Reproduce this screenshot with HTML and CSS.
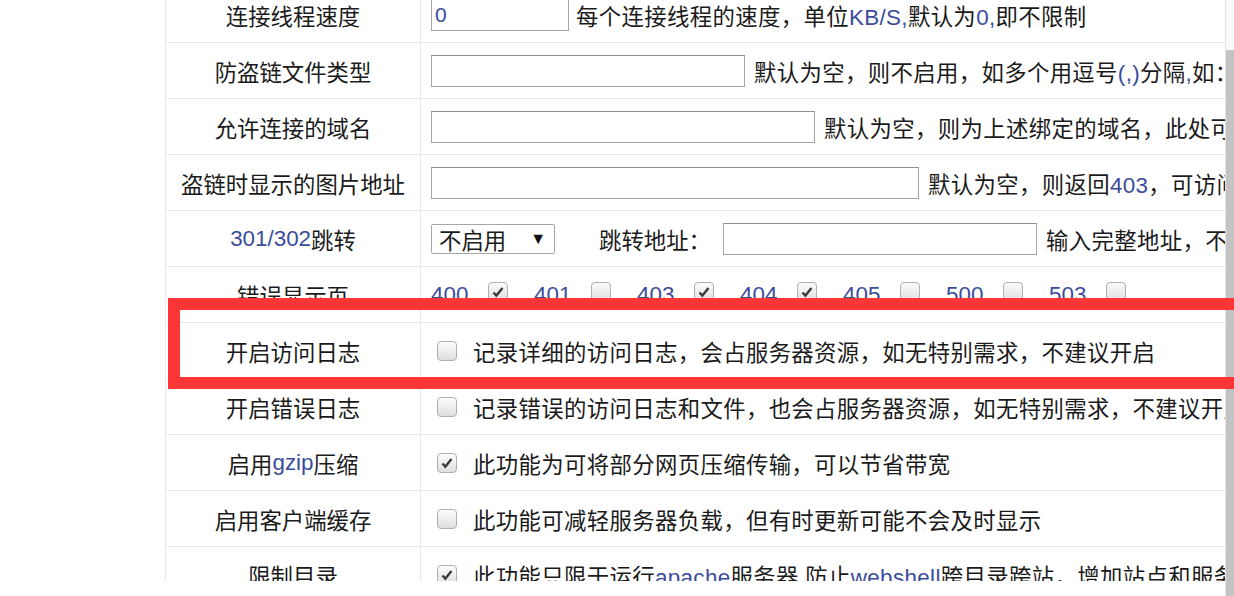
FILE: index.html
```html
<!DOCTYPE html>
<html lang="zh-CN">
<head>
    <meta charset="UTF-8">
    <title>网站配置</title>
    <link rel="stylesheet" href="styles.css">
</head>
<body>
    <div class="page">
        <div class="viewport">
            <div class="form">
                <div class="row">
                    <div class="label">连接线程速度</div>
                    <div class="value">
                        <input type="text" class="txt w138" value="0">
                        <span class="tip">每个连接线程的速度，单位<span class="en">KB/S,</span>默认为<span class="en">0,</span>即不限制</span>
                    </div>
                </div>
                <div class="row">
                    <div class="label">防盗链文件类型</div>
                    <div class="value">
                        <input type="text" class="txt w314">
                        <span class="tip">默认为空，则不启用，如多个用逗号<span class="en">(,)</span>分隔<span class="en">,</span>如：<span class="en">jpg,gif,png</span></span>
                    </div>
                </div>
                <div class="row">
                    <div class="label">允许连接的域名</div>
                    <div class="value">
                        <input type="text" class="txt w384">
                        <span class="tip">默认为空，则为上述绑定的域名，此处可填写多个域名</span>
                    </div>
                </div>
                <div class="row">
                    <div class="label">盗链时显示的图片地址</div>
                    <div class="value">
                        <input type="text" class="txt w488">
                        <span class="tip">默认为空，则返回<span class="en">403</span>，可访问的图片地址</span>
                    </div>
                </div>
                <div class="row">
                    <div class="label"><span class="en">301/302</span>跳转</div>
                    <div class="value">
                        <div class="select">不启用<span class="arrow">▼</span></div>
                        <span class="field-name">跳转地址：</span>
                        <input type="text" class="txt w314">
                        <span class="tip">输入完整地址，不带<span class="en">http://</span></span>
                    </div>
                </div>
                <div class="row">
                    <div class="label">错误显示页</div>
                    <div class="value codes">
                        <span class="code en">400</span><span class="cb on"><svg viewBox="0 0 20 20"><path d="M5 10.5l3.2 3.5L15 5.5" /></svg></span>
                        <span class="code en">401</span><span class="cb"></span>
                        <span class="code en">403</span><span class="cb on"><svg viewBox="0 0 20 20"><path d="M5 10.5l3.2 3.5L15 5.5" /></svg></span>
                        <span class="code en">404</span><span class="cb on"><svg viewBox="0 0 20 20"><path d="M5 10.5l3.2 3.5L15 5.5" /></svg></span>
                        <span class="code en">405</span><span class="cb"></span>
                        <span class="code en">500</span><span class="cb"></span>
                        <span class="code en">503</span><span class="cb"></span>
                    </div>
                </div>
                <div class="row">
                    <div class="label">开启访问日志</div>
                    <div class="value">
                        <span class="cb lead"></span>
                        <span class="tip">记录详细的访问日志，会占服务器资源，如无特别需求，不建议开启</span>
                    </div>
                </div>
                <div class="row">
                    <div class="label">开启错误日志</div>
                    <div class="value">
                        <span class="cb lead"></span>
                        <span class="tip">记录错误的访问日志和文件，也会占服务器资源，如无特别需求，不建议开启</span>
                    </div>
                </div>
                <div class="row">
                    <div class="label">启用<span class="en">gzip</span>压缩</div>
                    <div class="value">
                        <span class="cb lead on"><svg viewBox="0 0 20 20"><path d="M5 10.5l3.2 3.5L15 5.5" /></svg></span>
                        <span class="tip">此功能为可将部分网页压缩传输，可以节省带宽</span>
                    </div>
                </div>
                <div class="row">
                    <div class="label">启用客户端缓存</div>
                    <div class="value">
                        <span class="cb lead"></span>
                        <span class="tip">此功能可减轻服务器负载，但有时更新可能不会及时显示</span>
                    </div>
                </div>
                <div class="row">
                    <div class="label">限制目录</div>
                    <div class="value">
                        <span class="cb lead on"><svg viewBox="0 0 20 20"><path d="M5 10.5l3.2 3.5L15 5.5" /></svg></span>
                        <span class="tip">此功能只限于运行<span class="en">apache</span>服务器<span class="en">,</span>防止<span class="en">webshell</span>跨目录跨站，增加站点和服务器安全</span>
                    </div>
                </div>
            </div>
        </div>
        <div class="scrollbar">
            <div class="thumb"></div>
        </div>
        <div class="mark"></div>
    </div>
</body>
</html>
```
FILE: styles.css
```css
html, body {
    margin: 0;
    padding: 0;
    background: #fff;
}
body {
    font-family: "Liberation Sans", "Noto Sans CJK SC", sans-serif;
    font-size: 22.4px;
    color: #1a1a1a;
}
.page {
    position: relative;
    display: flex;
    height: 596px;
    overflow: hidden;
}
.viewport {
    margin-left: 165px;
    width: 1060px;
    height: 581px;
    overflow: hidden;
}
.form {
    margin-top: -13px;
    border-left: 1px solid #e3e8ef;
}
.row {
    display: grid;
    grid-template-columns: 255px 1fr;
    height: 55px;
    border-bottom: 1px solid #e3e8ef;
}
.label {
    display: flex;
    align-items: center;
    justify-content: center;
    border-right: 1px solid #e3e8ef;
    white-space: nowrap;
}
.value {
    display: flex;
    align-items: center;
    padding-left: 10px;
    white-space: nowrap;
    overflow: hidden;
}
.en {
    color: #3b4c9c;
}
.txt {
    box-sizing: border-box;
    height: 32px;
    margin: 0 9px 0 0;
    padding: 0 3px;
    border: 1px solid #a6a6a6;
    border-top-color: #8e8e8e;
    font-family: "Liberation Sans", sans-serif;
    font-size: 21px;
    color: #3b4c9c;
    background: #fff;
    flex: none;
}
.w138 { width: 138px; margin-right: 7px; }
.w314 { width: 314px; }
.w384 { width: 384px; }
.w488 { width: 488px; }
.tip {
    flex: none;
    letter-spacing: 0.35px;
}
.select {
    box-sizing: border-box;
    display: flex;
    align-items: center;
    width: 124px;
    height: 30px;
    padding-left: 7px;
    border: 1px solid #a6a6a6;
    border-radius: 2px;
    flex: none;
}
.arrow {
    margin-left: auto;
    margin-right: 8px;
    font-size: 16px;
    color: #111;
}
.field-name {
    margin: 0 12px 0 44px;
}
.cb {
    box-sizing: border-box;
    display: inline-flex;
    width: 20px;
    height: 20px;
    border: 1px solid #b0b0b0;
    border-radius: 4px;
    background: linear-gradient(#fcfcfc, #dedede);
    flex: none;
}
.cb svg {
    width: 18px;
    height: 18px;
}
.cb path {
    fill: none;
    stroke: #3a3a3a;
    stroke-width: 2.6;
}
.cb.lead {
    margin: 0 16px 0 6px;
}
.codes .code {
    width: 36px;
    margin-right: 21px;
    flex: none;
}
.codes .cb {
    margin-right: 26px;
    margin-top: -6px;
}
.scrollbar {
    width: 8px;
    height: 596px;
    border-left: 1px solid #e4e4e4;
    background: #fafafa;
    display: flex;
    flex-direction: column;
}
.thumb {
    margin-top: 50px;
    flex: 1;
    background: #c3c3c3;
}
.mark {
    position: absolute;
    left: 168px;
    top: 298px;
    width: 1057px;
    height: 67px;
    border: 12px solid #fc3636;
    border-right: none;
}
```
